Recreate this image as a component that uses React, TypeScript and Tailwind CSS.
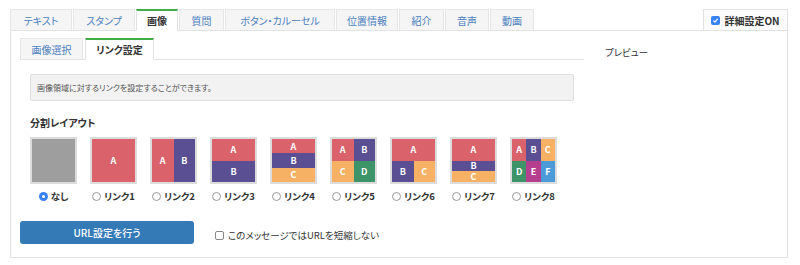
import React from "react";

// ─── Colours ──────────────────────────────────────────────────────────────────

const C = {
  A: "bg-[#d9626b]",
  B: "bg-[#5b4f94]",
  C: "bg-[#f6b164]",
  D: "bg-[#3d9468]",
  E: "bg-[#b53f8e]",
  F: "bg-[#4b9bd9]",
};

type Cell = { k: keyof typeof C; cls: string };

// each layout: grid template + cells
const LAYOUTS: { label: string; grid: string; cells: Cell[] }[] = [
  { label: "リンク1", grid: "grid-cols-1 grid-rows-1", cells: [{ k: "A", cls: "" }] },
  { label: "リンク2", grid: "grid-cols-2 grid-rows-1", cells: [{ k: "A", cls: "" }, { k: "B", cls: "" }] },
  { label: "リンク3", grid: "grid-cols-1 grid-rows-2", cells: [{ k: "A", cls: "" }, { k: "B", cls: "" }] },
  {
    label: "リンク4",
    grid: "grid-cols-1 grid-rows-3",
    cells: [{ k: "A", cls: "" }, { k: "B", cls: "" }, { k: "C", cls: "" }],
  },
  {
    label: "リンク5",
    grid: "grid-cols-2 grid-rows-2",
    cells: [{ k: "A", cls: "" }, { k: "B", cls: "" }, { k: "C", cls: "" }, { k: "D", cls: "" }],
  },
  {
    label: "リンク6",
    grid: "grid-cols-2 grid-rows-2",
    cells: [{ k: "A", cls: "col-span-2" }, { k: "B", cls: "" }, { k: "C", cls: "" }],
  },
  {
    label: "リンク7",
    grid: "grid-cols-1 grid-rows-[2fr_1fr_1fr]",
    cells: [{ k: "A", cls: "" }, { k: "B", cls: "text-[8px]" }, { k: "C", cls: "text-[8px]" }],
  },
  {
    label: "リンク8",
    grid: "grid-cols-3 grid-rows-2",
    cells: [
      { k: "A", cls: "" },
      { k: "B", cls: "" },
      { k: "C", cls: "" },
      { k: "D", cls: "" },
      { k: "E", cls: "" },
      { k: "F", cls: "" },
    ],
  },
];

const TABS = [
  { label: "テキスト", w: "w-[62px]" },
  { label: "スタンプ", w: "w-[62px]" },
  { label: "画像", w: "w-[42px]", active: true },
  { label: "質問", w: "w-[45px]" },
  { label: "ボタン・カルーセル", w: "w-[110px]" },
  { label: "位置情報", w: "w-[62px]" },
  { label: "紹介", w: "w-[45px]" },
  { label: "音声", w: "w-[44px]" },
  { label: "動画", w: "w-[44px]" },
];

// ─── Small controls ───────────────────────────────────────────────────────────

function Radio({ checked }: { checked?: boolean }) {
  return checked ? (
    <span className="w-[9px] h-[9px] rounded-full bg-[#3a82f7] flex items-center justify-center shrink-0">
      <span className="w-[3px] h-[3px] rounded-full bg-white" />
    </span>
  ) : (
    <span className="w-[9px] h-[9px] rounded-full border border-[#9a9a9a] bg-white shrink-0" />
  );
}

function Thumb({ children, grid }: { children?: React.ReactNode; grid?: string }) {
  return (
    <div className="w-[47px] h-[47px] border-2 border-[#dcdcdc] bg-white">
      <div className={`w-full h-full grid ${grid ?? ""}`}>{children}</div>
    </div>
  );
}

function Option({ label, checked, children }: { label: string; checked?: boolean; children: React.ReactNode }) {
  return (
    <div className="w-[47px] flex flex-col items-center gap-[8px]">
      {children}
      <div className="flex items-center gap-[3px] whitespace-nowrap text-[9.5px] font-bold text-[#333] leading-none">
        <Radio checked={checked} />
        <span>{label}</span>
      </div>
    </div>
  );
}

// ─── App ──────────────────────────────────────────────────────────────────────

export default function App() {
  return (
    <div
      className="w-[800px] h-[265px] bg-white pt-[9px] pl-[10px] [font-feature-settings:'palt']"
      style={{ fontFamily: '"Noto Sans CJK JP", "Noto Sans", sans-serif' }}
    >
      <div className="w-[778px]">
        {/* Top tabs */}
        <div className="flex items-end justify-between h-[21px]">
          <div className="flex items-end gap-px h-full">
            {TABS.map((t) =>
              t.active ? (
                <div
                  key={t.label}
                  className={`${t.w} h-[22px] -mb-px relative z-10 bg-white border border-[#e2e2e2] border-t-2 border-t-[#3fae49] border-b-white flex items-center justify-center text-[10px] font-bold text-[#333]`}
                >
                  {t.label}
                </div>
              ) : (
                <div
                  key={t.label}
                  className={`${t.w} h-full bg-[#f5f5f5] border border-[#e6e6e6] border-b-0 flex items-center justify-center text-[10px] text-[#4a7fc0]`}
                >
                  {t.label}
                </div>
              )
            )}
          </div>
          <div className="w-[85px] h-full border border-[#e2e2e2] border-b-0 bg-[#fbfbfb] flex items-center justify-center gap-[4px] text-[10px] font-bold text-[#333]">
            <span className="w-[9px] h-[9px] rounded-[2px] bg-[#3a82f7] flex items-center justify-center">
              <svg viewBox="0 0 10 10" className="w-[7px] h-[7px]">
                <path d="M2 5.2 L4.2 7.3 L8 2.8" fill="none" stroke="white" strokeWidth="1.6" />
              </svg>
            </span>
            詳細設定ON
          </div>
        </div>

        {/* Panel */}
        <div className="h-[228px] border border-[#e2e2e2] flex">
          {/* Left column */}
          <div className="w-[573px] pl-[9px] pt-[8px] flex flex-col">
            {/* Sub tabs */}
            <div className="flex items-end h-[21px] border-b border-[#e2e2e2]">
              <div className="w-[63px] h-[21px] bg-[#f5f5f5] border border-[#e6e6e6] border-b-0 flex items-center justify-center text-[10px] text-[#4a7fc0]">
                画像選択
              </div>
              <div className="w-[69px] h-[22px] ml-[2px] -mb-px bg-white border border-[#e2e2e2] border-t-2 border-t-[#3fae49] border-b-white flex items-center justify-center text-[10px] font-bold text-[#333]">
                リンク設定
              </div>
            </div>

            <div className="pl-[10px] pr-[10px] pt-[14px]">
              <div className="h-[27px] bg-[#f2f2f2] border border-[#e0e0e0] rounded-[2px] flex items-center pl-[6px] text-[8px] text-[#555]">
                画像領域に対するリンクを設定することができます。
              </div>

              <div className="mt-[17px] text-[10px] font-bold text-[#333] leading-none">分割レイアウト</div>

              <div className="mt-[9px] flex gap-[13px]">
                <Option label="なし" checked>
                  <Thumb>
                    <div className="bg-[#9e9e9e]" />
                  </Thumb>
                </Option>
                {LAYOUTS.map((l) => (
                  <Option key={l.label} label={l.label}>
                    <Thumb grid={l.grid}>
                      {l.cells.map((c) => (
                        <div
                          key={c.k}
                          className={`${C[c.k]} flex items-center justify-center text-white text-[9px] font-bold leading-none ${c.cls}`}
                        >
                          {c.k}
                        </div>
                      ))}
                    </Thumb>
                  </Option>
                ))}
              </div>
            </div>

            {/* Footer */}
            <div className="mt-[19px] flex items-center">
              <div className="w-[174px] h-[23px] rounded-[3px] bg-[#337ab7] flex items-center justify-center text-[10px] font-medium text-white">
                URL設定を行う
              </div>
              <div className="ml-[21px] mt-[6px] flex items-center gap-[4px] text-[9.5px] text-[#333]">
                <span className="w-[9px] h-[9px] border border-[#888] rounded-[2px] bg-white" />
                このメッセージではURLを短縮しない
              </div>
            </div>
          </div>

          {/* Preview column */}
          <div className="flex-1 pl-[21px] pt-[14px]">
            <div className="text-[9.5px] text-[#333]">プレビュー</div>
          </div>
        </div>
      </div>
    </div>
  );
}
